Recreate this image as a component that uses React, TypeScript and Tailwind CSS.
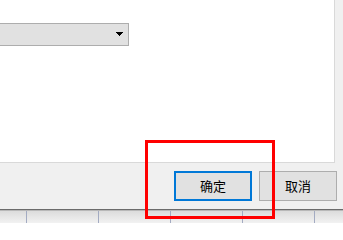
import React from 'react';

const cjk = { fontFamily: '"Noto Sans CJK SC", "Noto Sans", sans-serif' };

const ComboBox: React.FC = () => (
  <div className="-ml-[2px] mt-[23px] flex h-[23px] w-[131px] items-center justify-end border border-[#adadad] bg-[#e1e1e1] pr-[5px]">
    <svg width="7" height="4" viewBox="0 0 7 4" className="mb-[1px]">
      <path d="M0 0h7v1H6v1H5v1H4v1H3V3H2V2H1V1H0z" fill="#000" />
    </svg>
  </div>
);

const DialogButton: React.FC<{ label: string; primary?: boolean }> = ({ label, primary }) => (
  <button
    className={
      primary
        ? 'flex h-[30px] w-[78px] items-center justify-center border-2 border-[#0078d7] bg-[#e1e1e1] text-[13px] text-black'
        : 'flex h-[30px] w-[78px] items-center justify-center border border-[#adadad] bg-[#e1e1e1] text-[13px] text-black'
    }
    style={cjk}
  >
    {label}
  </button>
);

export default function App() {
  const cols = [0, 1, 2, 3, 4];

  return (
    <div className="relative flex h-[223px] w-[343px] flex-col overflow-hidden bg-[#f0f0f0]" style={cjk}>
      {/* content area */}
      <div className="flex h-[163px]">
        <div className="w-[335px] border-b border-r border-[#d9d9d9] bg-white">
          <ComboBox />
        </div>
        <div className="flex-1 bg-[#f0f0f0]" />
      </div>

      {/* button bar */}
      <div className="flex h-[46px] justify-end gap-[7px] pr-[6px] pt-[8px]">
        <DialogButton label="确定" primary />
        <DialogButton label="取消" />
      </div>

      {/* sheet behind the dialog */}
      <div className="h-px bg-[#6b6b6b]" />
      <div className="h-px bg-[#b8b8b8]" />
      <div className="flex flex-1 bg-gradient-to-b from-[#dcdcdc] to-[#f2f2f2] pl-[26px]">
        {cols.map((c) => (
          <div key={c} className="w-[72px] shrink-0 border-l border-[#a3abc2]" />
        ))}
      </div>

      {/* highlight */}
      <div className="absolute left-[145px] top-[140px] h-[79px] w-[130px] border-[3px] border-[#ff0000]" />
    </div>
  );
}
